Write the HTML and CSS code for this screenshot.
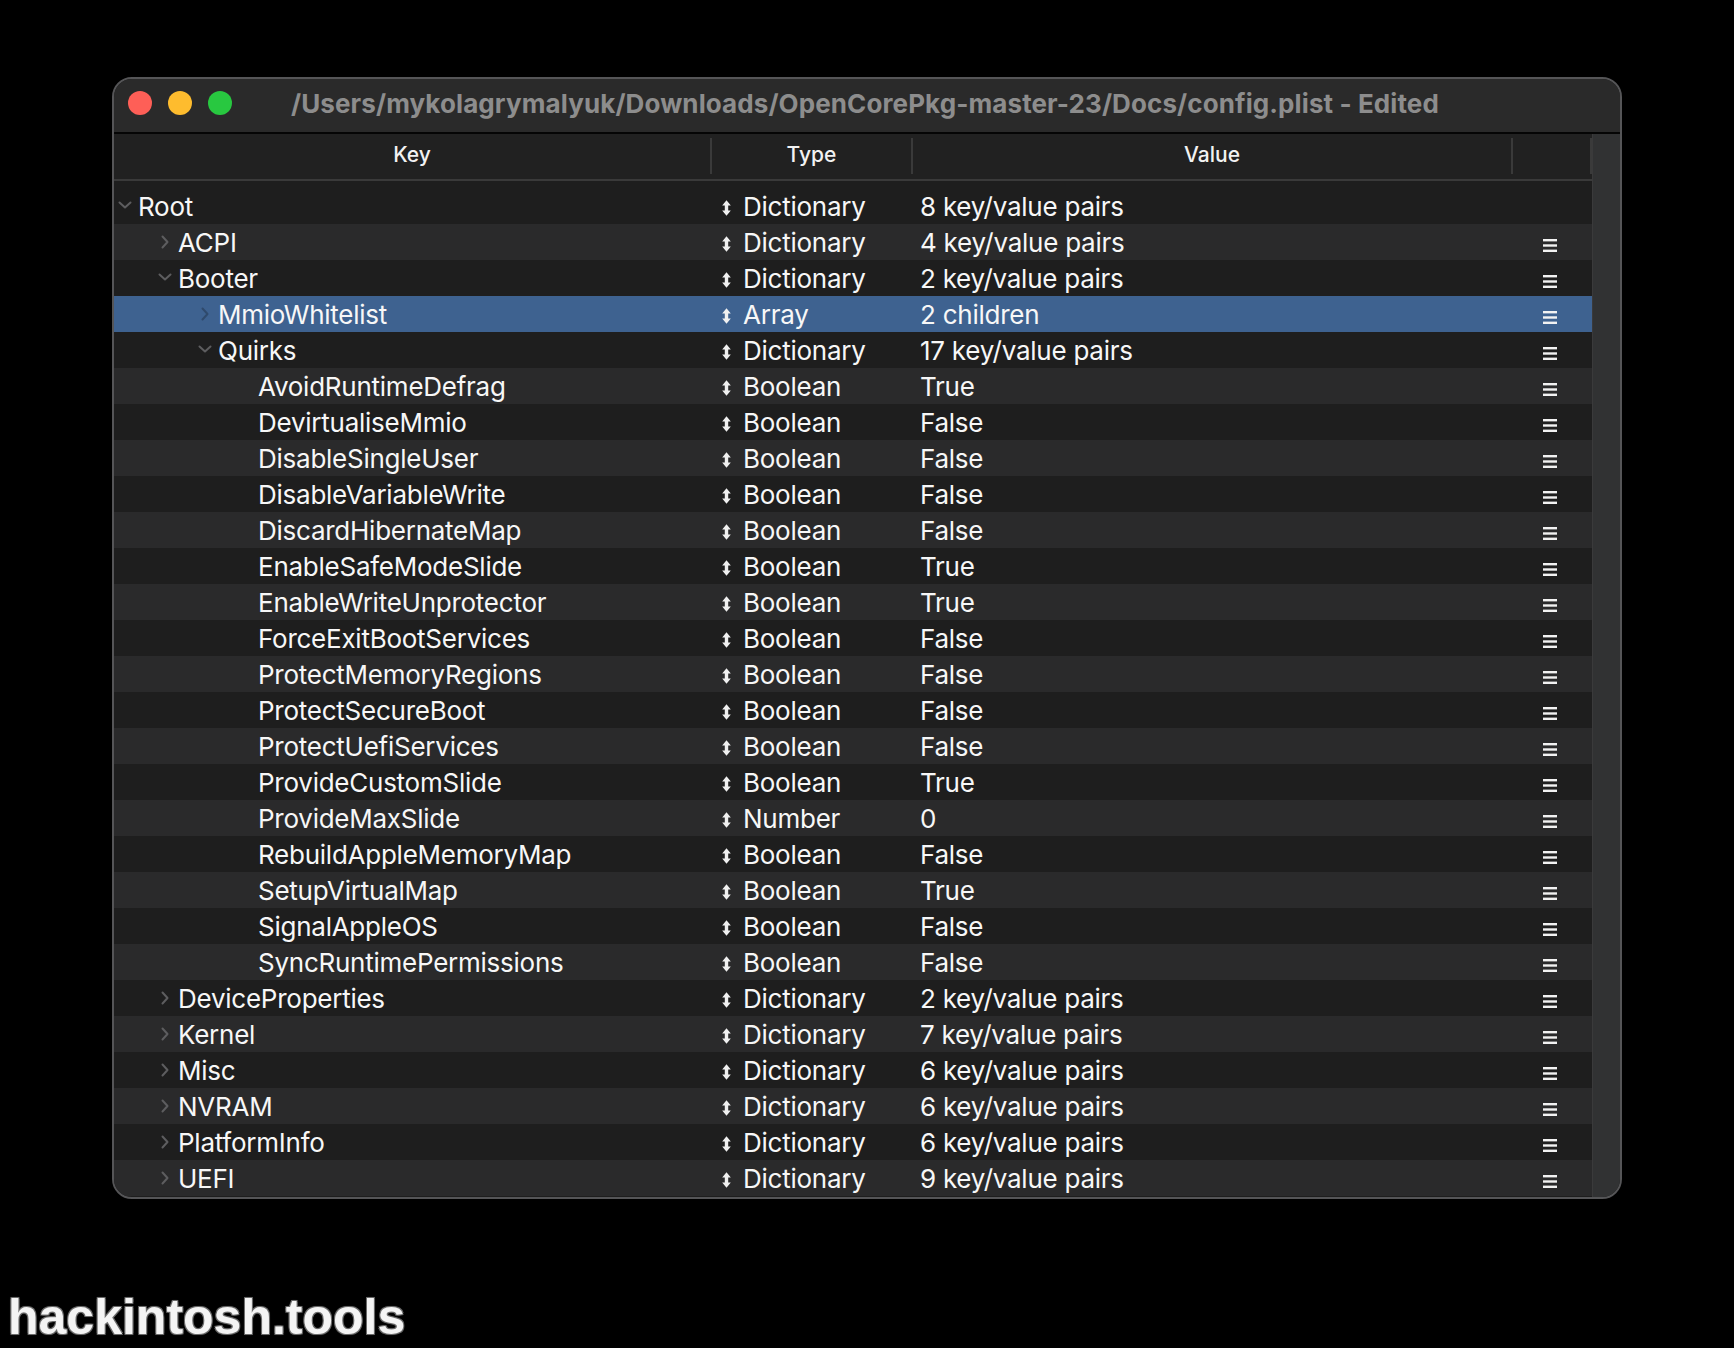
FILE: index.html
```html
<!DOCTYPE html>
<html>
<head>
<meta charset="utf-8">
<link rel="stylesheet" href="styles.css">
</head>
<body>
<svg class="defs" width="0" height="0">
  <defs>
    <symbol id="chev-r" viewBox="0 0 8 14"><polyline points="1.5,1.5 6.5,7 1.5,12.5" fill="none" stroke="currentColor" stroke-width="2" stroke-linecap="round" stroke-linejoin="round"/></symbol>
    <symbol id="chev-d" viewBox="0 0 14 8"><polyline points="1.5,1.5 7,6.5 12.5,1.5" fill="none" stroke="currentColor" stroke-width="2" stroke-linecap="round" stroke-linejoin="round"/></symbol>
    <symbol id="updown" viewBox="0 0 9 16"><path d="M4.5 0.3 L8.8 5.6 L6.2 5.6 L6.2 10.4 L8.8 10.4 L4.5 15.7 L0.2 10.4 L2.8 10.4 L2.8 5.6 L0.2 5.6 Z" fill="currentColor"/></symbol>
    <symbol id="menu" viewBox="0 0 14 13"><rect x="0" y="0" width="14" height="2.4" fill="currentColor"/><rect x="0" y="5.3" width="14" height="2.4" fill="currentColor"/><rect x="0" y="10.6" width="14" height="2.4" fill="currentColor"/></symbol>
  </defs>
</svg>
<div class="page">
  <div class="window">
    <div class="titlebar">
      <div class="lights">
        <span class="tl red"></span>
        <span class="tl yellow"></span>
        <span class="tl green"></span>
      </div>
      <div class="title">/Users/mykolagrymalyuk/Downloads/OpenCorePkg-master-23/Docs/config.plist - Edited</div>
    </div>
    <div class="content">
      <div class="table">
        <div class="header">
          <div class="hcell">Key</div>
          <div class="hcell">Type</div>
          <div class="hcell">Value</div>
          <div class="hcell"></div>
        </div>
        <div class="rows">
          <div class="row dark"><div class="key l0"><span class="tw"><svg class="cd"><use href="#chev-d"/></svg></span>Root</div><div class="type"><svg class="ud"><use href="#updown"/></svg>Dictionary</div><div class="val">8 key/value pairs</div><div class="act"></div></div>
          <div class="row alt"><div class="key l1"><span class="tw"><svg class="cr"><use href="#chev-r"/></svg></span>ACPI</div><div class="type"><svg class="ud"><use href="#updown"/></svg>Dictionary</div><div class="val">4 key/value pairs</div><div class="act"><svg class="mn"><use href="#menu"/></svg></div></div>
          <div class="row dark"><div class="key l1"><span class="tw"><svg class="cd"><use href="#chev-d"/></svg></span>Booter</div><div class="type"><svg class="ud"><use href="#updown"/></svg>Dictionary</div><div class="val">2 key/value pairs</div><div class="act"><svg class="mn"><use href="#menu"/></svg></div></div>
          <div class="row sel"><div class="key l2"><span class="tw"><svg class="cr"><use href="#chev-r"/></svg></span>MmioWhitelist</div><div class="type"><svg class="ud"><use href="#updown"/></svg>Array</div><div class="val">2 children</div><div class="act"><svg class="mn"><use href="#menu"/></svg></div></div>
          <div class="row dark"><div class="key l2"><span class="tw"><svg class="cd"><use href="#chev-d"/></svg></span>Quirks</div><div class="type"><svg class="ud"><use href="#updown"/></svg>Dictionary</div><div class="val">17 key/value pairs</div><div class="act"><svg class="mn"><use href="#menu"/></svg></div></div>
          <div class="row alt"><div class="key l3"><span class="tw"></span>AvoidRuntimeDefrag</div><div class="type"><svg class="ud"><use href="#updown"/></svg>Boolean</div><div class="val">True</div><div class="act"><svg class="mn"><use href="#menu"/></svg></div></div>
          <div class="row dark"><div class="key l3"><span class="tw"></span>DevirtualiseMmio</div><div class="type"><svg class="ud"><use href="#updown"/></svg>Boolean</div><div class="val">False</div><div class="act"><svg class="mn"><use href="#menu"/></svg></div></div>
          <div class="row alt"><div class="key l3"><span class="tw"></span>DisableSingleUser</div><div class="type"><svg class="ud"><use href="#updown"/></svg>Boolean</div><div class="val">False</div><div class="act"><svg class="mn"><use href="#menu"/></svg></div></div>
          <div class="row dark"><div class="key l3"><span class="tw"></span>DisableVariableWrite</div><div class="type"><svg class="ud"><use href="#updown"/></svg>Boolean</div><div class="val">False</div><div class="act"><svg class="mn"><use href="#menu"/></svg></div></div>
          <div class="row alt"><div class="key l3"><span class="tw"></span>DiscardHibernateMap</div><div class="type"><svg class="ud"><use href="#updown"/></svg>Boolean</div><div class="val">False</div><div class="act"><svg class="mn"><use href="#menu"/></svg></div></div>
          <div class="row dark"><div class="key l3"><span class="tw"></span>EnableSafeModeSlide</div><div class="type"><svg class="ud"><use href="#updown"/></svg>Boolean</div><div class="val">True</div><div class="act"><svg class="mn"><use href="#menu"/></svg></div></div>
          <div class="row alt"><div class="key l3"><span class="tw"></span>EnableWriteUnprotector</div><div class="type"><svg class="ud"><use href="#updown"/></svg>Boolean</div><div class="val">True</div><div class="act"><svg class="mn"><use href="#menu"/></svg></div></div>
          <div class="row dark"><div class="key l3"><span class="tw"></span>ForceExitBootServices</div><div class="type"><svg class="ud"><use href="#updown"/></svg>Boolean</div><div class="val">False</div><div class="act"><svg class="mn"><use href="#menu"/></svg></div></div>
          <div class="row alt"><div class="key l3"><span class="tw"></span>ProtectMemoryRegions</div><div class="type"><svg class="ud"><use href="#updown"/></svg>Boolean</div><div class="val">False</div><div class="act"><svg class="mn"><use href="#menu"/></svg></div></div>
          <div class="row dark"><div class="key l3"><span class="tw"></span>ProtectSecureBoot</div><div class="type"><svg class="ud"><use href="#updown"/></svg>Boolean</div><div class="val">False</div><div class="act"><svg class="mn"><use href="#menu"/></svg></div></div>
          <div class="row alt"><div class="key l3"><span class="tw"></span>ProtectUefiServices</div><div class="type"><svg class="ud"><use href="#updown"/></svg>Boolean</div><div class="val">False</div><div class="act"><svg class="mn"><use href="#menu"/></svg></div></div>
          <div class="row dark"><div class="key l3"><span class="tw"></span>ProvideCustomSlide</div><div class="type"><svg class="ud"><use href="#updown"/></svg>Boolean</div><div class="val">True</div><div class="act"><svg class="mn"><use href="#menu"/></svg></div></div>
          <div class="row alt"><div class="key l3"><span class="tw"></span>ProvideMaxSlide</div><div class="type"><svg class="ud"><use href="#updown"/></svg>Number</div><div class="val">0</div><div class="act"><svg class="mn"><use href="#menu"/></svg></div></div>
          <div class="row dark"><div class="key l3"><span class="tw"></span>RebuildAppleMemoryMap</div><div class="type"><svg class="ud"><use href="#updown"/></svg>Boolean</div><div class="val">False</div><div class="act"><svg class="mn"><use href="#menu"/></svg></div></div>
          <div class="row alt"><div class="key l3"><span class="tw"></span>SetupVirtualMap</div><div class="type"><svg class="ud"><use href="#updown"/></svg>Boolean</div><div class="val">True</div><div class="act"><svg class="mn"><use href="#menu"/></svg></div></div>
          <div class="row dark"><div class="key l3"><span class="tw"></span>SignalAppleOS</div><div class="type"><svg class="ud"><use href="#updown"/></svg>Boolean</div><div class="val">False</div><div class="act"><svg class="mn"><use href="#menu"/></svg></div></div>
          <div class="row alt"><div class="key l3"><span class="tw"></span>SyncRuntimePermissions</div><div class="type"><svg class="ud"><use href="#updown"/></svg>Boolean</div><div class="val">False</div><div class="act"><svg class="mn"><use href="#menu"/></svg></div></div>
          <div class="row dark"><div class="key l1"><span class="tw"><svg class="cr"><use href="#chev-r"/></svg></span>DeviceProperties</div><div class="type"><svg class="ud"><use href="#updown"/></svg>Dictionary</div><div class="val">2 key/value pairs</div><div class="act"><svg class="mn"><use href="#menu"/></svg></div></div>
          <div class="row alt"><div class="key l1"><span class="tw"><svg class="cr"><use href="#chev-r"/></svg></span>Kernel</div><div class="type"><svg class="ud"><use href="#updown"/></svg>Dictionary</div><div class="val">7 key/value pairs</div><div class="act"><svg class="mn"><use href="#menu"/></svg></div></div>
          <div class="row dark"><div class="key l1"><span class="tw"><svg class="cr"><use href="#chev-r"/></svg></span>Misc</div><div class="type"><svg class="ud"><use href="#updown"/></svg>Dictionary</div><div class="val">6 key/value pairs</div><div class="act"><svg class="mn"><use href="#menu"/></svg></div></div>
          <div class="row alt"><div class="key l1"><span class="tw"><svg class="cr"><use href="#chev-r"/></svg></span>NVRAM</div><div class="type"><svg class="ud"><use href="#updown"/></svg>Dictionary</div><div class="val">6 key/value pairs</div><div class="act"><svg class="mn"><use href="#menu"/></svg></div></div>
          <div class="row dark"><div class="key l1"><span class="tw"><svg class="cr"><use href="#chev-r"/></svg></span>PlatformInfo</div><div class="type"><svg class="ud"><use href="#updown"/></svg>Dictionary</div><div class="val">6 key/value pairs</div><div class="act"><svg class="mn"><use href="#menu"/></svg></div></div>
          <div class="row alt"><div class="key l1"><span class="tw"><svg class="cr"><use href="#chev-r"/></svg></span>UEFI</div><div class="type"><svg class="ud"><use href="#updown"/></svg>Dictionary</div><div class="val">9 key/value pairs</div><div class="act"><svg class="mn"><use href="#menu"/></svg></div></div>
        </div>
      </div>
      <div class="scrolltrack"></div>
    </div>
  </div>
  <div class="watermark">hackintosh.tools</div>
</div>
</body>
</html>
```

FILE: styles.css
```css
html, body {
  margin: 0;
  padding: 0;
  background: #000;
}
.defs {
  position: absolute;
  width: 0;
  height: 0;
}
.page {
  width: 1734px;
  height: 1348px;
  box-sizing: border-box;
  padding: 77px 0 0 112px;
  overflow: hidden;
  font-family: "Inter", "Noto Sans", sans-serif;
}
.window {
  width: 1510px;
  height: 1122px;
  box-sizing: border-box;
  border: 2px solid #555557;
  border-radius: 20px;
  overflow: hidden;
  background: #1e1e1e;
  display: flex;
  flex-direction: column;
}
.titlebar {
  height: 55px;
  flex: none;
  box-sizing: border-box;
  padding-bottom: 5px;
  border-bottom: 2px solid #050505;
  background: #2a2a2a;
  display: flex;
  align-items: center;
}
.lights {
  display: flex;
  gap: 16px;
  padding-left: 14px;
}
.tl {
  width: 24px;
  height: 24px;
  border-radius: 50%;
  display: block;
}
.red { background: #fe5f57; }
.yellow { background: #febc2e; }
.green { background: #28c840; }
.title {
  flex: 1;
  text-align: center;
  color: #8d8d8d;
  font-size: 26px;
  font-weight: 650;
  letter-spacing: 0.1px;
  padding-right: 122px;
  white-space: nowrap;
}
.content {
  flex: 1;
  display: flex;
  min-height: 0;
}
.table {
  width: 1478px;
  display: flex;
  flex-direction: column;
}
.header {
  height: 47px;
  flex: none;
  box-sizing: border-box;
  padding-bottom: 2px;
  border-bottom: 2px solid #3a3a3a;
  background: #212121;
  display: grid;
  grid-template-columns: 598px 201px 600px 79px;
  align-items: center;
}
.hcell {
  height: 36px;
  line-height: 33px;
  text-align: center;
  color: #f2f2f2;
  font-size: 21px;
  font-weight: 500;
  border-right: 2px solid #3a3a3a;
  box-sizing: border-box;
}
.rows {
  padding-top: 7px;
}
.row {
  height: 36px;
  display: grid;
  grid-template-columns: 597px 201px 600px 80px;
  align-items: center;
  color: #f7f7f7;
  font-size: 26px;
  letter-spacing: -0.25px;
  white-space: nowrap;
  line-height: 38px;
}
.row.dark { background: #1e1e1e; }
.row.alt { background: #2a2a2b; }
.row.sel { background: #3e6290; }
.key {
  display: flex;
  align-items: center;
}
.l0 { padding-left: 0; }
.l1 { padding-left: 40px; }
.l2 { padding-left: 80px; }
.l3 { padding-left: 120px; }
.tw {
  width: 24px;
  height: 36px;
  display: flex;
  align-items: center;
  justify-content: center;
  color: #5d5d5f;
}
.sel .tw { color: #2f4a6c; }
.cd {
  width: 14px;
  height: 8px;
  margin-top: -4px;
  margin-right: 2px;
}
.cr {
  width: 8px;
  height: 14px;
  margin-top: -2px;
  margin-right: 2px;
}
.type {
  display: flex;
  align-items: center;
  padding-left: 11px;
}
.ud {
  width: 9px;
  height: 16px;
  margin-right: 12px;
  margin-top: 1px;
  color: #f0f0f0;
}
.val {
  padding-left: 8px;
}
.act {
  display: flex;
  align-items: center;
  padding-left: 31px;
  height: 36px;
}
.mn {
  width: 14px;
  height: 13px;
  margin-top: 4px;
  color: #f2f2f2;
}
.scrolltrack {
  width: 28px;
  background: #313233;
  border-left: 1px solid #3a3a3b;
  box-sizing: border-box;
}
.watermark {
  margin-top: 93px;
  margin-left: -104px;
  font-family: "Liberation Sans", Arial, sans-serif;
  font-weight: 700;
  font-size: 50px;
  line-height: 50px;
  color: #f4f4f4;
  text-shadow: 0 0 2px #777, 1px 1px 0 #666, -1px -1px 0 #666, 1px -1px 0 #666, -1px 1px 0 #666;
}
```
